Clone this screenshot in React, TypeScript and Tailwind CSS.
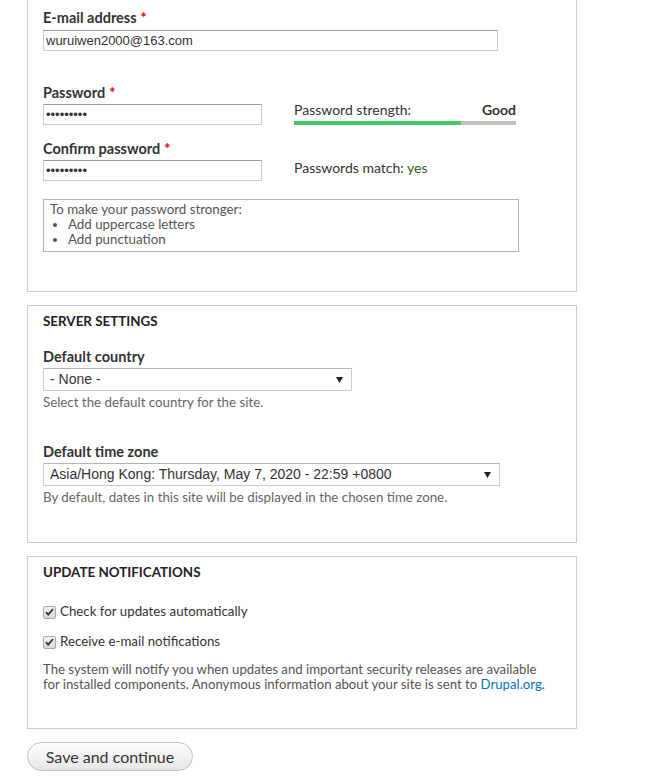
const body = "font-['Lato','Open_Sans',sans-serif]";
const field = "font-['Liberation_Sans',Arial,sans-serif] text-[13px] text-[#333]";

function Label({ text, required }: { text: string; required?: boolean }) {
  return (
    <div className="h-[18px] leading-[18px] text-[14.5px] font-bold text-[#333]">
      {text}
      {required && <span className="text-[#e00] ml-1">*</span>}
    </div>
  );
}

function Select({ value, width }: { value: string; width: string }) {
  return (
    <div
      className={`${width} h-[23px] flex items-center justify-between border border-[#ccc] border-t-[#b4b4b4] bg-white pl-[6px] pr-[8px] font-['Liberation_Sans',Arial,sans-serif] text-[14px] text-[#333]`}
    >
      <span>{value}</span>
      <svg width="7" height="6" viewBox="0 0 7 6">
        <path d="M0 0h7L3.5 6z" fill="#222" />
      </svg>
    </div>
  );
}

function Check({ label }: { label: string }) {
  return (
    <div className="flex items-center h-[18px] gap-[4px]">
      <span className="w-[13px] h-[13px] rounded-[2px] border border-[#a8a8a8] bg-gradient-to-b from-[#f4f4f4] to-[#d8d8d8] flex items-center justify-center">
        <svg width="9" height="8" viewBox="0 0 9 8">
          <path d="M1 4.2l2.2 2.4L8 1" stroke="#333" strokeWidth="1.8" fill="none" />
        </svg>
      </span>
      <span className="text-[13.3px] text-[#333]">{label}</span>
    </div>
  );
}

export default function App() {
  return (
    <div className={`bg-white w-[664px] h-[780px] pl-[27px] ${body}`}>
      <div className="w-[550px] border-x border-b border-[#ccc] pl-[15px] pt-[9px] h-[292px]">
        <Label text="E-mail address" required />
        <input
          readOnly
          value="wuruiwen2000@163.com"
          className={`mt-[2px] w-[455px] h-[21px] border border-[#ccc] border-t-[#999] px-[2px] outline-none ${field}`}
        />

        <div className="mt-[33px]">
          <Label text="Password" required />
          <div className="flex items-start mt-[2px] h-[21px]">
            <input
              readOnly
              type="password"
              value="123456789"
              className={`w-[219px] h-[21px] border border-[#ccc] border-t-[#999] px-[2px] outline-none ${field} text-[12px]`}
            />
            <div className="ml-[32px] w-[222px] -mt-[2px]">
              <div className="flex justify-between h-[16px] leading-[16px] text-[14px] text-[#333]">
                <span>Password strength:</span>
                <span className="font-bold">Good</span>
              </div>
              <div className="mt-[3px] h-[4px] bg-[#c0c0c0]">
                <div className="h-full w-[75%] bg-[#47c965]" />
              </div>
            </div>
          </div>
        </div>

        <div className="mt-[15px]">
          <Label text="Confirm password" required />
          <div className="flex items-center mt-[2px] h-[21px]">
            <input
              readOnly
              type="password"
              value="123456789"
              className={`w-[219px] h-[21px] border border-[#ccc] border-t-[#999] px-[2px] outline-none ${field} text-[12px]`}
            />
            <div className="ml-[32px] text-[14px] text-[#333] -mt-[6px]">
              Passwords match: <span className="text-[#325e1c]">yes</span>
            </div>
          </div>
        </div>

        <div className="mt-[18px] w-[476px] h-[53px] border border-[#b4b4b4] pl-[6px] pt-[2px] text-[13.3px] leading-[15px] text-[#555]">
          <div>To make your password stronger:</div>
          <ul className="list-disc pl-[18px]">
            <li>Add uppercase letters</li>
            <li>Add punctuation</li>
          </ul>
        </div>
      </div>

      <div className="mt-[13px] w-[550px] h-[238px] border border-[#ccc] pl-[15px] pt-[7px]">
        <div className="h-[16px] leading-[16px] text-[13.4px] font-bold text-[#222] uppercase">Server settings</div>
        <div className="mt-[19px]">
          <Label text="Default country" />
        </div>
        <div className="mt-[2px]">
          <Select value="- None -" width="w-[309px]" />
        </div>
        <div className="mt-[4px] text-[13.3px] leading-[15px] text-[#666]">Select the default country for the site.</div>
        <div className="mt-[33px]">
          <Label text="Default time zone" />
        </div>
        <div className="mt-[2px]">
          <Select value="Asia/Hong Kong: Thursday, May 7, 2020 - 22:59 +0800" width="w-[457px]" />
        </div>
        <div className="mt-[4px] text-[13.3px] leading-[15px] text-[#666]">
          By default, dates in this site will be displayed in the chosen time zone.
        </div>
      </div>

      <div className="mt-[13px] w-[550px] h-[173px] border border-[#ccc] pl-[15px] pt-[7px]">
        <div className="h-[16px] leading-[16px] text-[13.4px] font-bold text-[#222] uppercase">Update notifications</div>
        <div className="mt-[23px]">
          <Check label="Check for updates automatically" />
        </div>
        <div className="mt-[12px]">
          <Check label="Receive e-mail notifications" />
        </div>
        <p className="mt-[11px] text-[13.2px] leading-[15px] text-[#555]">
          The system will notify you when updates and important security releases are available
          <br />
          for installed components. Anonymous information about your site is sent to{" "}
          <a className="text-[#0074bd]">Drupal.org</a>.
        </p>
      </div>

      <button className="mt-[13px] w-[166px] h-[29px] rounded-full border border-[#c0c0c0] bg-gradient-to-b from-[#fefefe] to-[#e6e6e6] text-[16px] text-[#333]">
        Save and continue
      </button>
    </div>
  );
}
